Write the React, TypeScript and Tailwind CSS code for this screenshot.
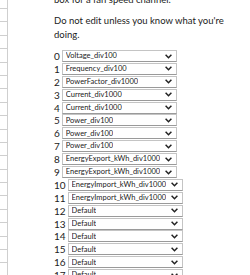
import React from "react";

const channels = [
    "Voltage_div100",
    "Frequency_div100",
    "PowerFactor_div1000",
    "Current_div1000",
    "Current_div1000",
    "Power_div100",
    "Power_div100",
    "Power_div100",
    "EnergyExport_kWh_div1000",
    "EnergyExport_kWh_div1000",
    "EnergyImport_kWh_div1000",
    "EnergyImport_kWh_div1000",
    "Default",
    "Default",
    "Default",
    "Default",
    "Default",
    "Default",
];

const Chevron = () => (
    <svg width="7" height="5" viewBox="0 0 7 5" className="shrink-0">
        <path d="M0.6 0.8 L3.5 3.7 L6.4 0.8" fill="none" stroke="#222" strokeWidth="1.5" />
    </svg>
);

const App: React.FC = () => {
    return (
        <div className="w-[250px] h-[275px] overflow-hidden bg-white flex font-['Lato',sans-serif] text-[#222]">
            {/* cut-off table on the left */}
            <div className="w-[8px] shrink-0 border-r border-[#cfcfcf] flex flex-col pt-[8px]">
                {Array.from({ length: 21 }).map((_, i) => (
                    <div key={i} className="h-[13.4px] shrink-0 border-t border-[#cfcfcf]"></div>
                ))}
            </div>

            <div className="pl-[46px] flex flex-col">
                <p className="text-[9.5px] leading-[14px] mt-[-7px] whitespace-nowrap">box for a fan speed channel.</p>
                <p className="text-[9.5px] leading-[14px] mt-[7px] w-[180px]">
                    Do not edit unless you know what you're doing.
                </p>

                <div className="mt-[8px] flex flex-col gap-[0.9px]">
                    {channels.map((name, i) => (
                        <div key={i} className="flex items-center h-[12px]">
                            <span className="text-[10px] leading-none mr-[2px]">{i}</span>
                            <div className="w-[115px] h-[12px] flex items-center justify-between pl-[3px] pr-[4px] bg-white border border-[#c4c4c4] border-b-[#9a9a9a]">
                                <span className="text-[7.5px] leading-none whitespace-nowrap overflow-hidden">{name}</span>
                                <Chevron />
                            </div>
                        </div>
                    ))}
                </div>
            </div>
        </div>
    );
};

export default App;
